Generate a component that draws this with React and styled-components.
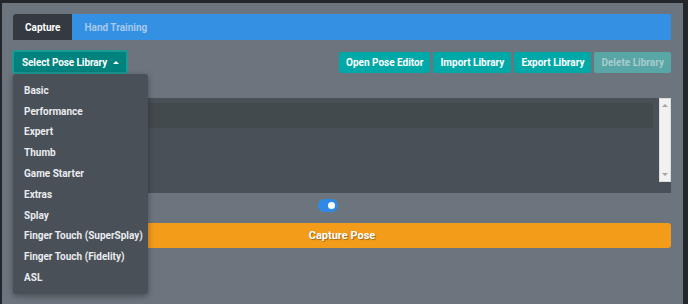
import styled, { createGlobalStyle } from 'styled-components';

const GlobalStyle = createGlobalStyle`
  html, body {
    margin: 0;
    padding: 0;
    background: #23272b;
    font-family: Roboto, 'Liberation Sans', Arial, sans-serif;
  }
`;

const poseLibraries = [
  'Basic',
  'Performance',
  'Expert',
  'Thumb',
  'Game Starter',
  'Extras',
  'Splay',
  'Finger Touch (SuperSplay)',
  'Finger Touch (Fidelity)',
  'ASL',
];

const Page = styled.div`
  padding: 3px 5px 0 2px;
  height: 304px;
  box-sizing: border-box;
`;

const Panel = styled.div`
  background: #6c757d;
  height: 301px;
  box-sizing: border-box;
  padding: 11px 12px 0 11px;
  display: flex;
  flex-direction: column;
`;

const Tabs = styled.div`
  display: flex;
  height: 26px;
  background: #3490e2;
  border-radius: 3px 0 0 0;
`;

const Tab = styled.div`
  display: flex;
  align-items: center;
  padding: 0 12px;
  font-size: 10px;
  font-weight: 700;
  color: ${(p) => (p.$active ? '#ffffff' : '#a7c9ee')};
  background: ${(p) => (p.$active ? '#343a40' : 'transparent')};
  border-radius: ${(p) => (p.$active ? '3px 0 0 0' : '0')};
`;

const Toolbar = styled.div`
  display: flex;
  justify-content: space-between;
  align-items: center;
  margin-top: 10px;
  height: 24px;
`;

const DropdownWrap = styled.div`
  position: relative;
  margin-left: -1px;
`;

const SelectButton = styled.div`
  display: flex;
  align-items: center;
  gap: 6px;
  height: 24px;
  box-sizing: border-box;
  padding: 0 7px 0 8px;
  background: #00827e;
  border: 2px solid #1d9a95;
  border-radius: 3px;
  color: #ffffff;
  font-size: 10px;
  font-weight: 700;
  letter-spacing: -0.1px;
`;

const Caret = styled.span`
  width: 0;
  height: 0;
  border-left: 3px solid transparent;
  border-right: 3px solid transparent;
  border-bottom: 3px solid #ffffff;
`;

const Menu = styled.div`
  position: absolute;
  top: 100%;
  left: 1px;
  width: 135px;
  box-sizing: border-box;
  padding: 6px 0;
  background: #495057;
  border-radius: 3px;
  box-shadow: 0 2px 6px rgba(0, 0, 0, 0.35);
  z-index: 5;
`;

const MenuItem = styled.div`
  height: 20.8px;
  display: flex;
  align-items: center;
  padding-left: 11px;
  font-size: 10px;
  font-weight: 700;
  color: #e9ecef;
  white-space: nowrap;
`;

const ButtonGroup = styled.div`
  display: flex;
  gap: 3px;
`;

const ActionButton = styled.div`
  height: 21px;
  display: flex;
  align-items: center;
  padding: 0 7px;
  border-radius: 2px;
  font-size: 10px;
  font-weight: 700;
  background: ${(p) => (p.$disabled ? '#58a6a6' : '#00a9a8')};
  color: ${(p) => (p.$disabled ? '#a9cccc' : '#ffffff')};
`;

const Output = styled.div`
  margin-top: 24px;
  height: 95px;
  background: #495057;
  display: flex;
  align-items: flex-start;
  gap: 6px;
`;

const OutputRow = styled.div`
  flex: 1;
  height: 25px;
  margin-top: 5px;
  background: #434a4e;
`;

const Scrollbar = styled.div`
  width: 12px;
  height: 84px;
  background: #f1f1f1;
  box-sizing: border-box;
  border: 1px solid #dcdcdc;
  display: flex;
  flex-direction: column;
  justify-content: space-between;
  align-items: center;
  padding: 5px 0;
`;

const Arrow = styled.span`
  width: 0;
  height: 0;
  border-left: 3px solid transparent;
  border-right: 3px solid transparent;
  ${(p) =>
    p.$up ? 'border-bottom: 3px solid #a3a3a3;' : 'border-top: 3px solid #a3a3a3;'}
`;

const SwitchRow = styled.div`
  display: flex;
  justify-content: center;
  margin-top: 6px;
  height: 13px;
`;

const Switch = styled.div`
  width: 20px;
  height: 13px;
  margin-right: 28px;
  border-radius: 7px;
  background: #2f8ae6;
  position: relative;

  &::after {
    content: '';
    position: absolute;
    top: 3px;
    right: 3px;
    width: 7px;
    height: 7px;
    border-radius: 50%;
    background: #ffffff;
  }
`;

const CaptureButton = styled.div`
  margin-top: 11px;
  height: 25px;
  display: flex;
  align-items: center;
  justify-content: center;
  background: #f39c1a;
  border-radius: 3px;
  color: #ffffff;
  font-size: 11px;
  font-weight: 700;
  text-shadow: 1px 1px 1px rgba(0, 0, 0, 0.35);
`;

export default function App() {
  return (
    <>
      <GlobalStyle />
      <Page>
        <Panel>
          <Tabs>
            <Tab $active>Capture</Tab>
            <Tab>Hand Training</Tab>
          </Tabs>
          <Toolbar>
            <DropdownWrap>
              <SelectButton>
                Select Pose Library <Caret />
              </SelectButton>
              <Menu>
                {poseLibraries.map((name) => (
                  <MenuItem key={name}>{name}</MenuItem>
                ))}
              </Menu>
            </DropdownWrap>
            <ButtonGroup>
              <ActionButton>Open Pose Editor</ActionButton>
              <ActionButton>Import Library</ActionButton>
              <ActionButton>Export Library</ActionButton>
              <ActionButton $disabled>Delete Library</ActionButton>
            </ButtonGroup>
          </Toolbar>
          <Output>
            <OutputRow />
            <Scrollbar>
              <Arrow $up />
              <Arrow />
            </Scrollbar>
          </Output>
          <SwitchRow>
            <Switch />
          </SwitchRow>
          <CaptureButton>Capture Pose</CaptureButton>
        </Panel>
      </Page>
    </>
  );
}
